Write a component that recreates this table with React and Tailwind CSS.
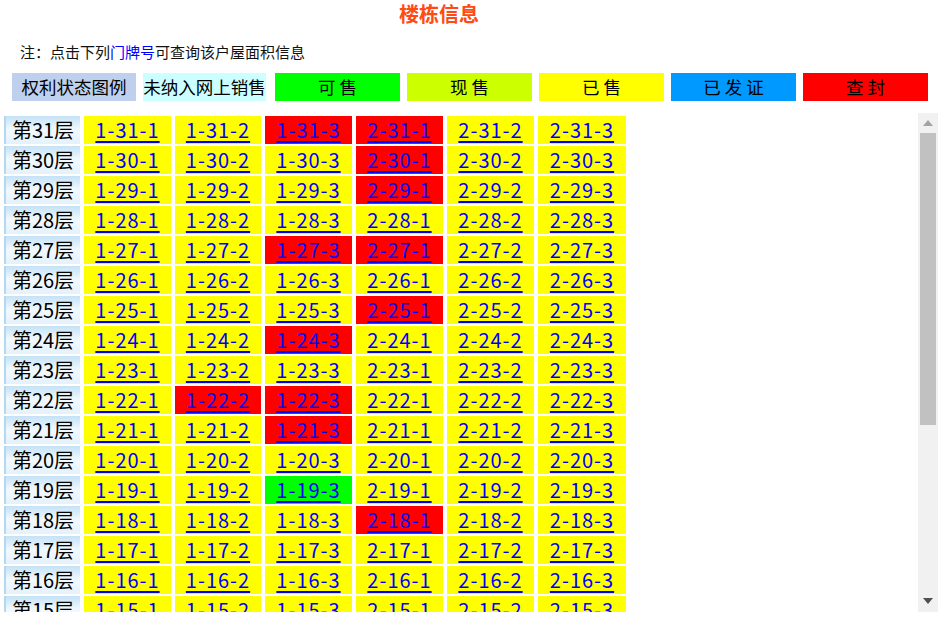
import React from "react";

const FONT = { fontFamily: '"Noto Sans CJK SC", "Noto Sans", sans-serif' };

const red = new Set([
  "1-31-3", "2-31-1", "2-30-1", "2-29-1", "1-27-3", "2-27-1", "2-25-1",
  "1-24-3", "1-22-2", "1-22-3", "1-21-3", "2-18-1",
]);
const green = new Set(["1-19-3"]);

const floors = [];
for (let f = 31; f >= 15; f--) floors.push(f);

const units = ["1-", "1-", "1-", "2-", "2-", "2-"];
const nums = ["1", "2", "3", "1", "2", "3"];
const widths = ["w-[87px]", "w-[86px]", "w-[87px]", "w-[87px]", "w-[87px]", "w-[88px]"];

function Cell({ id, w }) {
  const bg = red.has(id)
    ? "bg-[#ff0000]"
    : green.has(id)
    ? "bg-[#00ff00]"
    : "bg-[#ffff00]";
  return (
    <div className={`${w} h-[28px] ${bg} flex items-center justify-center shrink-0`}>
      <a
        href="#"
        className="text-[#0000ff] underline decoration-[1.5px] underline-offset-[3px] text-[20px] leading-[28px] tracking-[1px]"
      >
        {id}
      </a>
    </div>
  );
}

function Legend({ className, children }) {
  return (
    <div className={`h-[28px] flex items-center justify-center shrink-0 text-black ${className}`}>
      {children}
    </div>
  );
}

export default function App() {
  return (
    <div className="w-[950px] h-[632px] bg-white overflow-hidden text-black" style={FONT}>
      <div className="w-[878px] h-[28px] flex items-center justify-center text-[20px] font-bold text-[#ff4a12]">
        楼栋信息
      </div>
      <div className="pl-[20px] mt-[14px] h-[20px] text-[15px] leading-[20px] text-[#111]">
        注：点击下列<span className="text-[#0000ff]">门牌号</span>可查询该户屋面积信息
      </div>
      <div className="flex ml-[12px] mt-[11px] h-[28px] text-[17.5px]">
        <Legend className="w-[124px] bg-[#bed0ee]">权利状态图例</Legend>
        <Legend className="w-[123px] ml-[7px] bg-[#ccffff] whitespace-nowrap">未纳入网上销售</Legend>
        <Legend className="w-[125px] ml-[9px] bg-[#00ff00]">可&nbsp;售</Legend>
        <Legend className="w-[125px] ml-[7px] bg-[#ccff00]">现&nbsp;售</Legend>
        <Legend className="w-[125px] ml-[7px] bg-[#ffff00]">已&nbsp;售</Legend>
        <Legend className="w-[125px] ml-[7px] bg-[#0099ff]">已&nbsp;发&nbsp;证</Legend>
        <Legend className="w-[125px] ml-[7px] bg-[#ff0000]">查&nbsp;封</Legend>
      </div>
      <div className="flex mt-[12px] h-[499px]">
        <div className="w-[918px] h-[499px] overflow-hidden">
          <div className="pt-[3px] pl-[4px] flex flex-col gap-[2px]">
            {floors.map((f) => (
              <div key={f} className="flex gap-[4px] h-[28px] shrink-0">
                <div className="w-[76px] h-[28px] shrink-0 flex items-center justify-center text-[20px] bg-gradient-to-b from-[#c4e2f7] via-[#f2f9fe] to-[#e4f2fc] border-l-[2px] border-[#b3d9f2]">
                  第{f}层
                </div>
                {units.map((u, i) => (
                  <Cell key={i} id={`${u}${f}-${nums[i]}`} w={widths[i]} />
                ))}
              </div>
            ))}
          </div>
        </div>
        <div className="w-[20px] h-[499px] bg-[#f1f1f1] flex flex-col shrink-0">
          <div className="h-[20px] flex items-center justify-center">
            <svg width="10" height="6" viewBox="0 0 10 6">
              <polygon points="5,0 10,6 0,6" fill="#a3a3a3" />
            </svg>
          </div>
          <div className="h-[292px] mx-[2px] bg-[#c1c1c1]" />
          <div className="flex-1" />
          <div className="h-[22px] flex items-center justify-center">
            <svg width="10" height="6" viewBox="0 0 10 6">
              <polygon points="0,0 10,0 5,6" fill="#505050" />
            </svg>
          </div>
        </div>
      </div>
    </div>
  );
}
